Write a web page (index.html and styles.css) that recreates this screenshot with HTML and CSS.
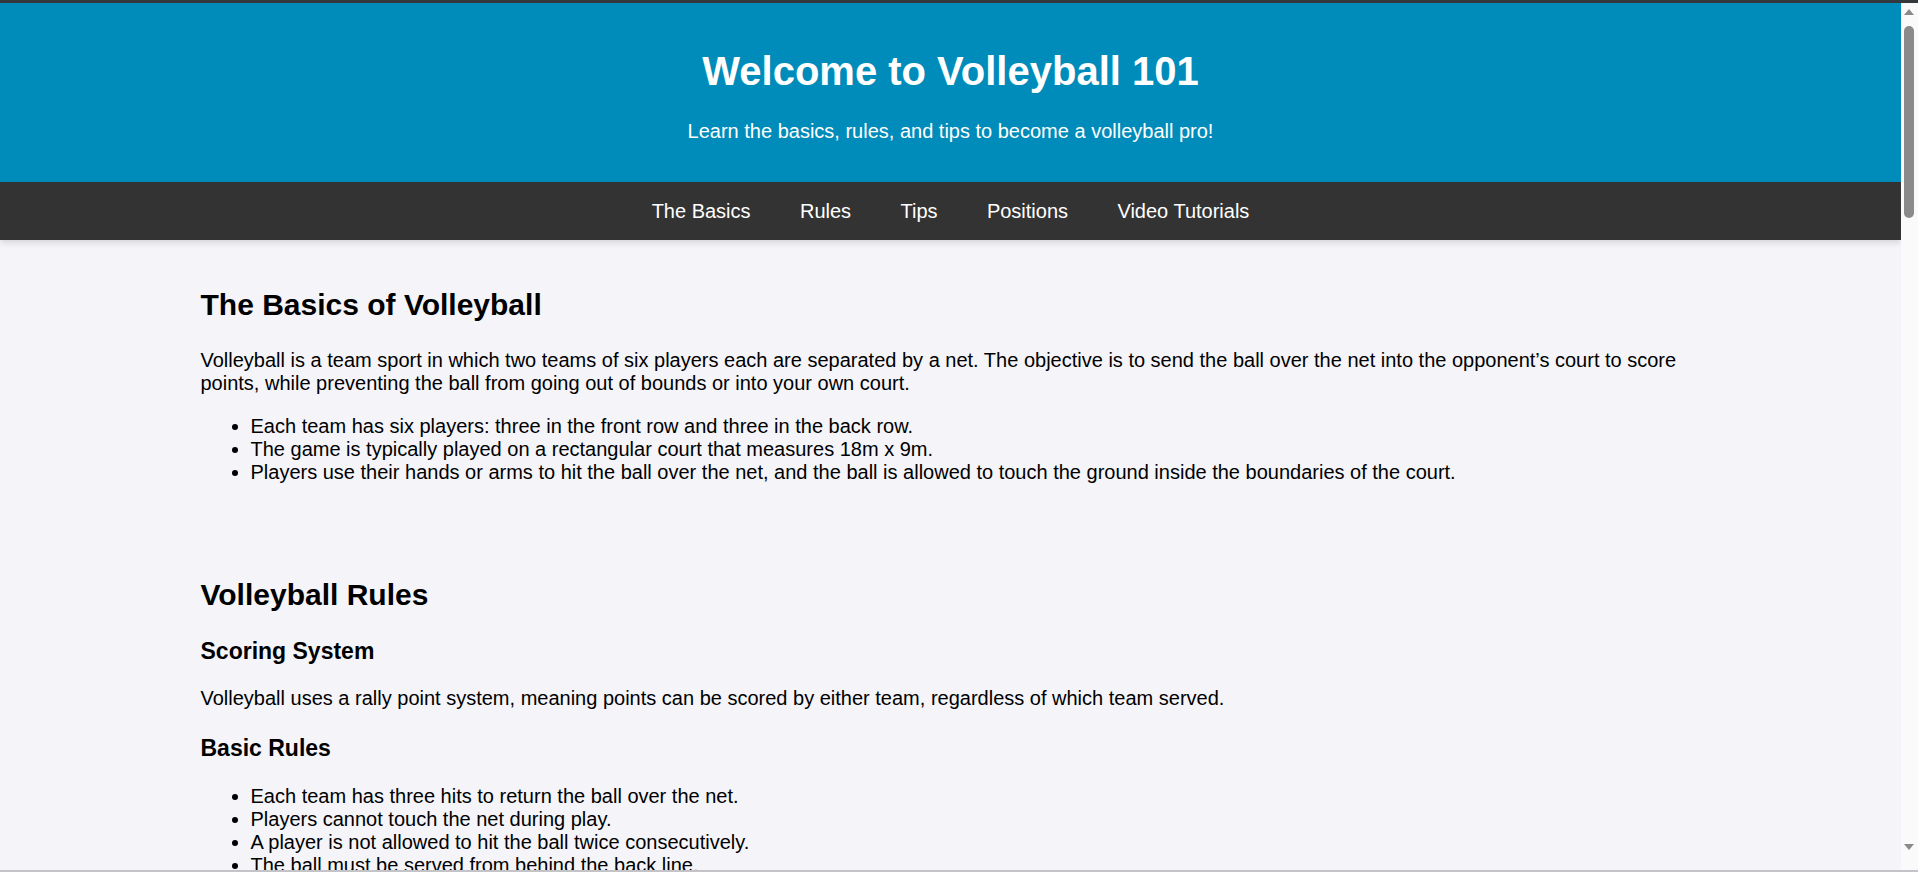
FILE: index.html
```html
<!DOCTYPE html>
<html lang="en">
<head>
<meta charset="UTF-8">
<title>Volleyball 101</title>
<link rel="stylesheet" href="styles.css">
</head>
<body>
<div class="window">
  <div class="viewport">
    <header class="site-header">
      <h1 class="site-title">Welcome to Volleyball 101</h1>
      <p class="site-tagline">Learn the basics, rules, and tips to become a volleyball pro!</p>
    </header>
    <nav class="site-nav">
      <a href="#basics" class="nav-link">The Basics</a>
      <a href="#rules" class="nav-link">Rules</a>
      <a href="#tips" class="nav-link">Tips</a>
      <a href="#positions" class="nav-link">Positions</a>
      <a href="#videos" class="nav-link">Video Tutorials</a>
    </nav>
    <main class="content">
      <section class="section" id="basics">
        <h2 class="section-title">The Basics of Volleyball</h2>
        <p class="text">Volleyball is a team sport in which two teams of six players each are separated by a net. The objective is to send the ball over the net into the opponent’s court to score points, while preventing the ball from going out of bounds or into your own court.</p>
        <ul class="list">
          <li>Each team has six players: three in the front row and three in the back row.</li>
          <li>The game is typically played on a rectangular court that measures 18m x 9m.</li>
          <li>Players use their hands or arms to hit the ball over the net, and the ball is allowed to touch the ground inside the boundaries of the court.</li>
        </ul>
      </section>
      <section class="section" id="rules">
        <h2 class="section-title">Volleyball Rules</h2>
        <h3 class="sub-title">Scoring System</h3>
        <p class="text">Volleyball uses a rally point system, meaning points can be scored by either team, regardless of which team served.</p>
        <h3 class="sub-title">Basic Rules</h3>
        <ul class="list">
          <li>Each team has three hits to return the ball over the net.</li>
          <li>Players cannot touch the net during play.</li>
          <li>A player is not allowed to hit the ball twice consecutively.</li>
          <li>The ball must be served from behind the back line.</li>
          <li>A match is usually played best of five sets; sets are played to 25 points and must be won by 2.</li>
        </ul>
      </section>
      <section class="section" id="tips">
        <h2 class="section-title">Tips for Beginners</h2>
        <ul class="list">
          <li>Always keep your eyes on the ball.</li>
          <li>Stay low and be ready to move in any direction.</li>
          <li>Communicate with your teammates by calling for the ball.</li>
          <li>Practice your serve regularly to build consistency.</li>
        </ul>
      </section>
      <section class="section" id="positions">
        <h2 class="section-title">Volleyball Positions</h2>
        <h3 class="sub-title">Setter</h3>
        <p class="text">The setter is responsible for running the offense and setting the ball for the attackers.</p>
        <h3 class="sub-title">Outside Hitter</h3>
        <p class="text">The outside hitter attacks from the left side of the court and is often the primary attacker.</p>
        <h3 class="sub-title">Libero</h3>
        <p class="text">The libero is a defensive specialist who wears a different colored jersey and cannot attack the ball above the net.</p>
      </section>
      <section class="section" id="videos">
        <h2 class="section-title">Video Tutorials</h2>
        <div class="video-list">
          <div class="video-box">How to Serve</div>
          <div class="video-box">Passing Fundamentals</div>
        </div>
      </section>
    </main>
    <footer class="site-footer">
      <p class="footer-text">&copy; 2024 Volleyball 101. All rights reserved.</p>
    </footer>
  </div>
  <div class="scrollbar" aria-hidden="true">
    <div class="sb-button">
      <span class="sb-arrow-up"></span>
    </div>
    <div class="sb-track">
      <div class="sb-thumb"></div>
    </div>
    <div class="sb-button sb-button-down">
      <span class="sb-arrow-down"></span>
    </div>
  </div>
</div>
</body>
</html>
```
FILE: styles.css
```css
html, body {
  margin: 0;
  padding: 0;
}

body {
  height: 100vh;
  box-sizing: border-box;
  display: flex;
  flex-direction: column;
  overflow: hidden;
  font-family: "Liberation Sans", Arial, Helvetica, sans-serif;
  font-size: 20px;
  line-height: 23px;
  color: #000;
  background: #f4f4f9;
  border-top: 3px solid #33383d;
  border-bottom: 2px solid #c4c4c8;
}

.window {
  flex: 1;
  min-height: 0;
  display: flex;
}

.viewport {
  flex: 1;
  min-width: 0;
  overflow: hidden;
  background: #f4f4f9;
}

/* Browser scrollbar */
.scrollbar {
  width: 17px;
  flex: none;
  background: #fafafa;
  display: flex;
  flex-direction: column;
}

.sb-button {
  height: 17px;
  flex: none;
  display: flex;
  padding-left: 3px;
}

.sb-button-down {
  margin-bottom: 14px;
}

.sb-arrow-up {
  width: 0;
  height: 0;
  margin-top: 6px;
  border-left: 5px solid transparent;
  border-right: 5px solid transparent;
  border-bottom: 6px solid #8a8a8a;
}

.sb-arrow-down {
  width: 0;
  height: 0;
  margin-top: 5px;
  border-left: 5px solid transparent;
  border-right: 5px solid transparent;
  border-top: 6px solid #8a8a8a;
}

.sb-track {
  flex: 1;
  padding: 6px 0 0 3px;
}

.sb-thumb {
  width: 10px;
  height: 192px;
  background: #8a8a8a;
  border-radius: 5px;
}

/* Page */
.site-header {
  background: #008cba;
  color: #fff;
  text-align: center;
  padding: 45px 20px 39px;
}

.site-title {
  margin: 0;
  font-size: 40px;
  line-height: 46px;
  font-weight: bold;
}

.site-tagline {
  margin: 26px 0 0;
  font-size: 20px;
  line-height: 23px;
}

.site-nav {
  background: #333;
  display: flex;
  justify-content: center;
  padding: 18px 0 17px;
  box-shadow: 0 3px 6px rgba(0, 0, 0, 0.12);
  position: relative;
}

.nav-link {
  color: #fff;
  text-decoration: none;
  padding: 0 24.7px;
  font-size: 20px;
  line-height: 23px;
}

.content {
  max-width: 1500px;
  margin: 0 auto;
}

.section {
  padding: 25px 0 26px;
}

.section-title {
  margin: 23px 0 26px;
  font-size: 30px;
  line-height: 34.5px;
  font-weight: bold;
}

.sub-title {
  margin: 25px 0 23px;
  font-size: 23px;
  line-height: 26.4px;
  font-weight: bold;
}

.text {
  margin: 0 0 20px;
}

.list {
  margin: 0 0 20px;
  padding-left: 50px;
}

.video-list {
  display: flex;
  flex-direction: column;
  gap: 30px;
}

.video-box {
  width: 700px;
  height: 394px;
  background: #222;
  color: #fff;
  display: flex;
  align-items: center;
  justify-content: center;
}

.site-footer {
  background: #333;
  color: #fff;
  text-align: center;
  padding: 20px;
}

.footer-text {
  margin: 0;
}
```
